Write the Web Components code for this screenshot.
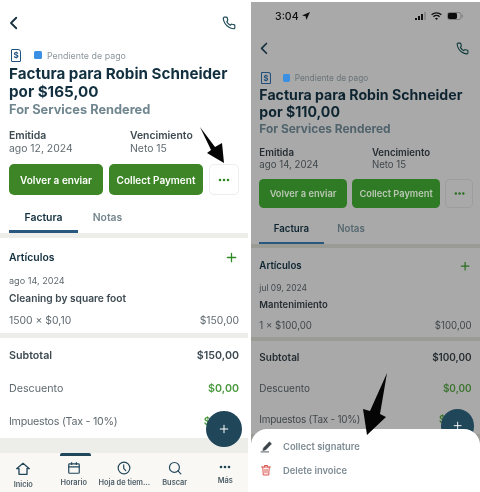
<!DOCTYPE html>
<html lang="es">
<head>
<meta charset="utf-8">
<title>Factura</title>
<style>
  html, body { margin: 0; background: #fff; }
  body { width: 480px; height: 492px; overflow: hidden; font-family: Inter, "Liberation Sans", sans-serif; }
</style>
</head>
<body>
<phone-pair>
  <invoice-phone amount="$165,00" issued="ago 12, 2024" item-date="ago 14, 2024" item-name="Cleaning by square foot"
    qty="1500 × $0,10" line-total="$150,00" subtotal="$150,00" with-nav></invoice-phone>
  <invoice-phone dimmed amount="$110,00" issued="ago 14, 2024" item-date="jul 09, 2024" item-name="Mantenimiento"
    qty="1 × $100,00" line-total="$100,00" subtotal="$100,00">
    <status-bar slot="top"></status-bar>
    <action-sheet slot="overlay"></action-sheet>
  </invoice-phone>
</phone-pair>

<script>
const ICONS = {
  back: '<path d="M15 5l-7 7 7 7"/>',
  phone: '<path d="M22 16.9v3a2 2 0 0 1-2.2 2 19.8 19.8 0 0 1-8.6-3.1 19.5 19.5 0 0 1-6-6 19.8 19.8 0 0 1-3.1-8.7A2 2 0 0 1 4.1 2h3a2 2 0 0 1 2 1.7c.1 1 .4 1.9.7 2.8a2 2 0 0 1-.5 2.1L8.1 9.9a16 16 0 0 0 6 6l1.3-1.3a2 2 0 0 1 2.1-.4c.9.3 1.8.6 2.8.7a2 2 0 0 1 1.7 2z"/>',
  home: '<path d="M2.5 11.5 12 3.5l9.5 8H18V20H6v-8.5z"/>',
  calendar: '<rect x="3" y="5" width="18" height="16" rx="1.5"/><path d="M3 10h18M8 2.5V6M16 2.5V6"/>',
  clock: '<circle cx="12" cy="12" r="10"/><path d="M11.5 6.5v6l3.5 4"/>',
  search: '<circle cx="11" cy="11" r="8.5"/><path d="M17 17l5 5"/>',
  dots: '<circle cx="4" cy="12" r="2.6" fill="currentColor" stroke="none"/><circle cx="12" cy="12" r="2.6" fill="currentColor" stroke="none"/><circle cx="20" cy="12" r="2.6" fill="currentColor" stroke="none"/>',
  plus: '<path d="M12 3v18M3 12h18"/>',
  pen: '<path d="M7 14.5 17.5 3.5l3.5 3.5L10.5 18l-4.5 1z" fill="currentColor"/><path d="M2 22h14"/>',
  trash: '<path d="M3 6h18M9 6V3h6v3M5.5 6l1 16h11l1-16M10 10.5v7.5M14 10.5v7.5"/>'
};

function icon(name, size, width = 2) {
  return `<svg width="${size}" height="${size}" viewBox="0 0 24 24" fill="none" stroke="currentColor"
    stroke-width="${width}" stroke-linecap="round" stroke-linejoin="round" style="display:block">${ICONS[name]}</svg>`;
}

class PhonePair extends HTMLElement {
  constructor() {
    super();
    this.attachShadow({ mode: 'open' });
  }

  connectedCallback() {
    this.shadowRoot.innerHTML = `
      <style>
        :host { display: flex; position: relative; gap: 3px; width: 480px; height: 492px; overflow: hidden; }
        svg { position: absolute; left: 0; top: 0; z-index: 5; pointer-events: none; filter: blur(.4px); }
      </style>
      <slot></slot>
      <svg width="480" height="492" viewBox="0 0 480 492" fill="#050505">
        <path d="M200 127 215 147 222 143 224 163 207 153 211 150z"/>
        <path d="M387 373 380 414 386 417 367 435 363 409 370 411z"/>
      </svg>
    `;
  }
}

class StatusBar extends HTMLElement {
  constructor() {
    super();
    this.attachShadow({ mode: 'open' });
  }

  connectedCallback() {
    this.shadowRoot.innerHTML = `
      <style>
        :host { display: flex; align-items: center; height: 25px; padding: 3px 17px 0 24px; box-sizing: border-box;
          color: #101010; font-size: 10.6px; font-weight: 500; }
        .time { margin-right: 3px; }
        .right { display: flex; align-items: center; gap: 5px; margin-left: auto; }
      </style>
      <span class="time">3:04</span>
      <svg width="8" height="8" viewBox="0 0 8 8" fill="currentColor"><path d="M8 0 0 3.6l3.6.7L4.4 8z"/></svg>
      <div class="right">
        <svg width="11" height="8" viewBox="0 0 11 8"><path fill="#111" d="M0 6h2v2H0zM3 4h2v4H3zM6 2h2v6H6z"/><path fill="#8c8c8c" d="M9 0h2v8H9z"/></svg>
        <svg width="11" height="8" viewBox="0 0 11 8" fill="none" stroke="#111" stroke-width="1.3"><path d="M.6 2.8a7 7 0 0 1 9.8 0M2.4 4.7a4.5 4.5 0 0 1 6.2 0"/><path d="M5.5 8 4 6.4a2.2 2.2 0 0 1 3 0z" fill="#111" stroke="none"/></svg>
        <svg width="16" height="8" viewBox="0 0 16 8"><rect x=".5" y=".5" width="13.5" height="7" rx="2" fill="none" stroke="#7d7d7d"/><rect x="1" y="1" width="9" height="6" rx="1.4" fill="#0c0c0c"/><rect x="14.8" y="2.7" width="1" height="2.6" fill="#7d7d7d"/></svg>
      </div>
    `;
  }
}

class TotalRow extends HTMLElement {
  constructor() {
    super();
    this.attachShadow({ mode: 'open' });
  }

  connectedCallback() {
    this.shadowRoot.innerHTML = `
      <style>
        :host { display: flex; justify-content: space-between; align-items: center; height: 33px; color: var(--soft); font-size: 10.7px; }
        :host([strong]) { color: var(--text); font-weight: 600; }
        :host([tight]) .l { letter-spacing: -.25px; }
        .v { font-weight: 600; font-size: 10.7px; }
        :host([green]) .v { color: var(--amount-green); }
      </style>
      <span class="l">${this.getAttribute('label')}</span>
      <span class="v">${this.getAttribute('value')}</span>
    `;
  }
}

class NavItem extends HTMLElement {
  constructor() {
    super();
    this.attachShadow({ mode: 'open' });
  }

  connectedCallback() {
    const active = this.hasAttribute('active');
    this.shadowRoot.innerHTML = `
      <style>
        :host { display: flex; flex-direction: column; align-items: center; position: relative; padding-top: 8px; color: #20465a; }
        .label { margin-top: 3px; font-size: 7.4px; font-weight: 600; line-height: 10px; color: #4f5f68; white-space: nowrap; }
        .bar { position: absolute; top: 0; left: 11px; width: 31px; height: 3px; border-radius: 2px 2px 0 0; background: #20465a; }
      </style>
      ${active ? '<span class="bar"></span>' : ''}
      ${icon(this.getAttribute('icon'), this.getAttribute('size') || 14, 2)}
      <span class="label">${this.getAttribute('label')}</span>
    `;
  }
}

class ActionSheet extends HTMLElement {
  constructor() {
    super();
    this.attachShadow({ mode: 'open' });
  }

  connectedCallback() {
    this.shadowRoot.innerHTML = `
      <style>
        :host { display: block; position: absolute; left: 0; right: 0; bottom: 0; height: 63px; z-index: 3; box-sizing: border-box;
          padding-top: 5px; background: #fff; border-radius: 16px 16px 0 0; }
        .row { display: flex; align-items: center; height: 24px; padding-left: 9px; color: #7f8c94; font-size: 9.4px; font-weight: 600; }
        .ic { width: 23px; }
        .pen { color: #3a4247; }
        .del { color: #d9534f; }
      </style>
      <div class="row"><span class="ic pen">${icon('pen', 13, 1.6)}</span>Collect signature</div>
      <div class="row"><span class="ic del">${icon('trash', 12, 2)}</span>Delete invoice</div>
    `;
  }
}

class InvoicePhone extends HTMLElement {
  constructor() {
    super();
    this.attachShadow({ mode: 'open' });
  }

  connectedCallback() {
    const a = (name) => this.getAttribute(name);
    const nav = this.hasAttribute('with-nav') ? `
      <nav class="nav">
        <nav-item icon="home" size="16" label="Inicio"></nav-item>
        <nav-item icon="calendar" label="Horario" active></nav-item>
        <nav-item icon="clock" label="Hoja de tiem..."></nav-item>
        <nav-item icon="search" label="Buscar"></nav-item>
        <nav-item icon="dots" size="12" label="Más"></nav-item>
      </nav>` : '';

    this.shadowRoot.innerHTML = `
      <style>
        :host {
          display: flex; flex-direction: column; position: relative; box-sizing: border-box; overflow: hidden;
          width: 248px; height: 492px; flex: none; filter: blur(.35px);
          --bg: #fff; --band: #edede9; --ink: #12303f; --sub: #70868f; --muted: #8b969b; --text: #3d4a52; --soft: #5f6a70;
          --green: #3d8527; --amount-green: #4a9a3f; --plus: #2f8a25; --tab-off: #75868f; --border: #ecedec; --head: #1f4a58;
          --btn-text: #fff; --zoom: 1;
        }
        :host([dimmed]) {
          width: 229px; height: 490px; margin-top: 2px;
          --bg: #a9a9a9; --band: #9b9b96; --ink: #0e2531; --sub: #50636c; --muted: #687478; --text: #252d32; --soft: #40484c;
          --green: #2f7a24; --amount-green: #3c7430; --plus: #2a6d20; --tab-off: #566870; --border: #9d9d9d; --head: #0f3a3a;
          --btn-text: #b9c7b4; --zoom: .93;
          background: var(--bg);
        }
        .content { position: relative; zoom: var(--zoom); background: var(--bg); flex: none; }
        .head { display: flex; justify-content: space-between; align-items: center; height: 46px; padding: 0 12px 0 5px; color: var(--head); }
        .head .back { color: #16303e; }
        .meta { display: flex; align-items: center; height: 14px; margin-top: 2px; padding-left: 11px; color: var(--muted); font-size: 8.9px; }
        .doc { display: flex; align-items: center; justify-content: center; width: 10px; height: 13px; box-sizing: border-box;
          border: 1.3px solid #1f4f7a; border-radius: 1px 3px 1px 1px; color: #1f4f7a; font-size: 8px; font-weight: 700; }
        .sq { width: 8px; height: 8px; margin: 0 5px 0 13px; border-radius: 1.5px; background: #3b90e4; }
        h1 { margin: 3px 0 0; padding: 0 9px; color: var(--ink); font-size: 15.2px; font-weight: 700; line-height: 18px; white-space: nowrap; }
        h2 { margin: 0; padding: 0 9px; color: var(--sub); font-size: 12.8px; font-weight: 700; line-height: 18px; white-space: nowrap; }
        .dates { display: flex; margin-top: 10px; padding: 0 9px; color: var(--soft); font-size: 10.4px; line-height: 13px; }
        .dates > div { flex: none; width: 121px; }
        .dates b { display: block; color: var(--text); font-weight: 600; }
        .actions { display: flex; gap: 6px; margin-top: 9px; padding: 0 9px; }
        .btn { display: flex; align-items: center; justify-content: center; flex: none; width: 94px; height: 31px; box-sizing: border-box; border-radius: 5px;
          background: var(--green); color: var(--btn-text); font-size: 10px; font-weight: 600; white-space: nowrap; }
        .more { width: 30px; background: var(--bg); border: 1px solid var(--border); color: var(--plus); }
        .tabs { display: flex; height: 38px; padding: 0 9px; font-size: 10.4px; font-weight: 600; }
        .tab { display: flex; justify-content: center; box-sizing: border-box; width: 69px; padding-top: 16px; color: var(--ink); }
        .tab.on { border-bottom: 3px solid #28587f; }
        .tab.off { width: 59px; color: var(--tab-off); }
        .band { height: 5px; background: var(--band); }
        .items { padding: 12px 9px 5px; color: var(--soft); font-size: 10.4px; }
        .row { display: flex; justify-content: space-between; align-items: center; }
        .items-title { height: 14px; color: var(--ink); font-weight: 600; }
        .items-title span { margin-right: 2px; color: var(--plus); }
        .date { margin-top: 11px; font-size: 9.1px; line-height: 12px; }
        .name { margin-top: 4px; color: var(--text); font-size: 10.2px; font-weight: 600; line-height: 14px; }
        .qty { margin-top: 9px; line-height: 14px; }
        .totals { padding: 1px 9px 0; }
        .tail { height: 15px; background: var(--band); }
        .fab { position: absolute; right: 6px; top: 411px; display: flex; align-items: center; justify-content: center; width: 36px; height: 36px;
          border-radius: 50%; background: #20465a; color: #fff; }
        .nav { display: grid; grid-template-columns: repeat(5, 50.5px); flex: 1; margin-left: -2px; background: #f9f8f5; }
      </style>
      <slot name="top"></slot>
      <div class="content">
        <div class="head"><span class="back">${icon('back', 18, 2.4)}</span>${icon('phone', 14, 2)}</div>
        <div class="meta"><span class="doc">$</span><span class="sq"></span>Pendiente de pago</div>
        <h1>Factura para Robin Schneider<br>por ${a('amount')}</h1>
        <h2>For Services Rendered</h2>
        <div class="dates">
          <div><b>Emitida</b>${a('issued')}</div>
          <div><b>Vencimiento</b>Neto 15</div>
        </div>
        <div class="actions">
          <div class="btn">Volver a enviar</div>
          <div class="btn">Collect Payment</div>
          <div class="btn more">${icon('dots', 12, 2)}</div>
        </div>
        <div class="tabs"><div class="tab on">Factura</div><div class="tab off">Notas</div></div>
        <div class="band"></div>
        <div class="items">
          <div class="row items-title">Artículos<span>${icon('plus', 11, 2.8)}</span></div>
          <div class="date">${a('item-date')}</div>
          <div class="name">${a('item-name')}</div>
          <div class="row qty"><span>${a('qty')}</span><span>${a('line-total')}</span></div>
        </div>
        <div class="band"></div>
        <div class="totals">
          <total-row strong label="Subtotal" value="${a('subtotal')}"></total-row>
          <total-row green label="Descuento" value="$0,00"></total-row>
          <total-row green tight label="Impuestos (Tax - 10%)" value="$15,00"></total-row>
        </div>
        <div class="tail"></div>
        <div class="fab">${icon('plus', 10, 2.4)}</div>
      </div>
      ${nav}
      <slot name="overlay"></slot>
    `;
  }
}

customElements.define('phone-pair', PhonePair);
customElements.define('status-bar', StatusBar);
customElements.define('total-row', TotalRow);
customElements.define('nav-item', NavItem);
customElements.define('action-sheet', ActionSheet);
customElements.define('invoice-phone', InvoicePhone);
</script>
</body>
</html>
